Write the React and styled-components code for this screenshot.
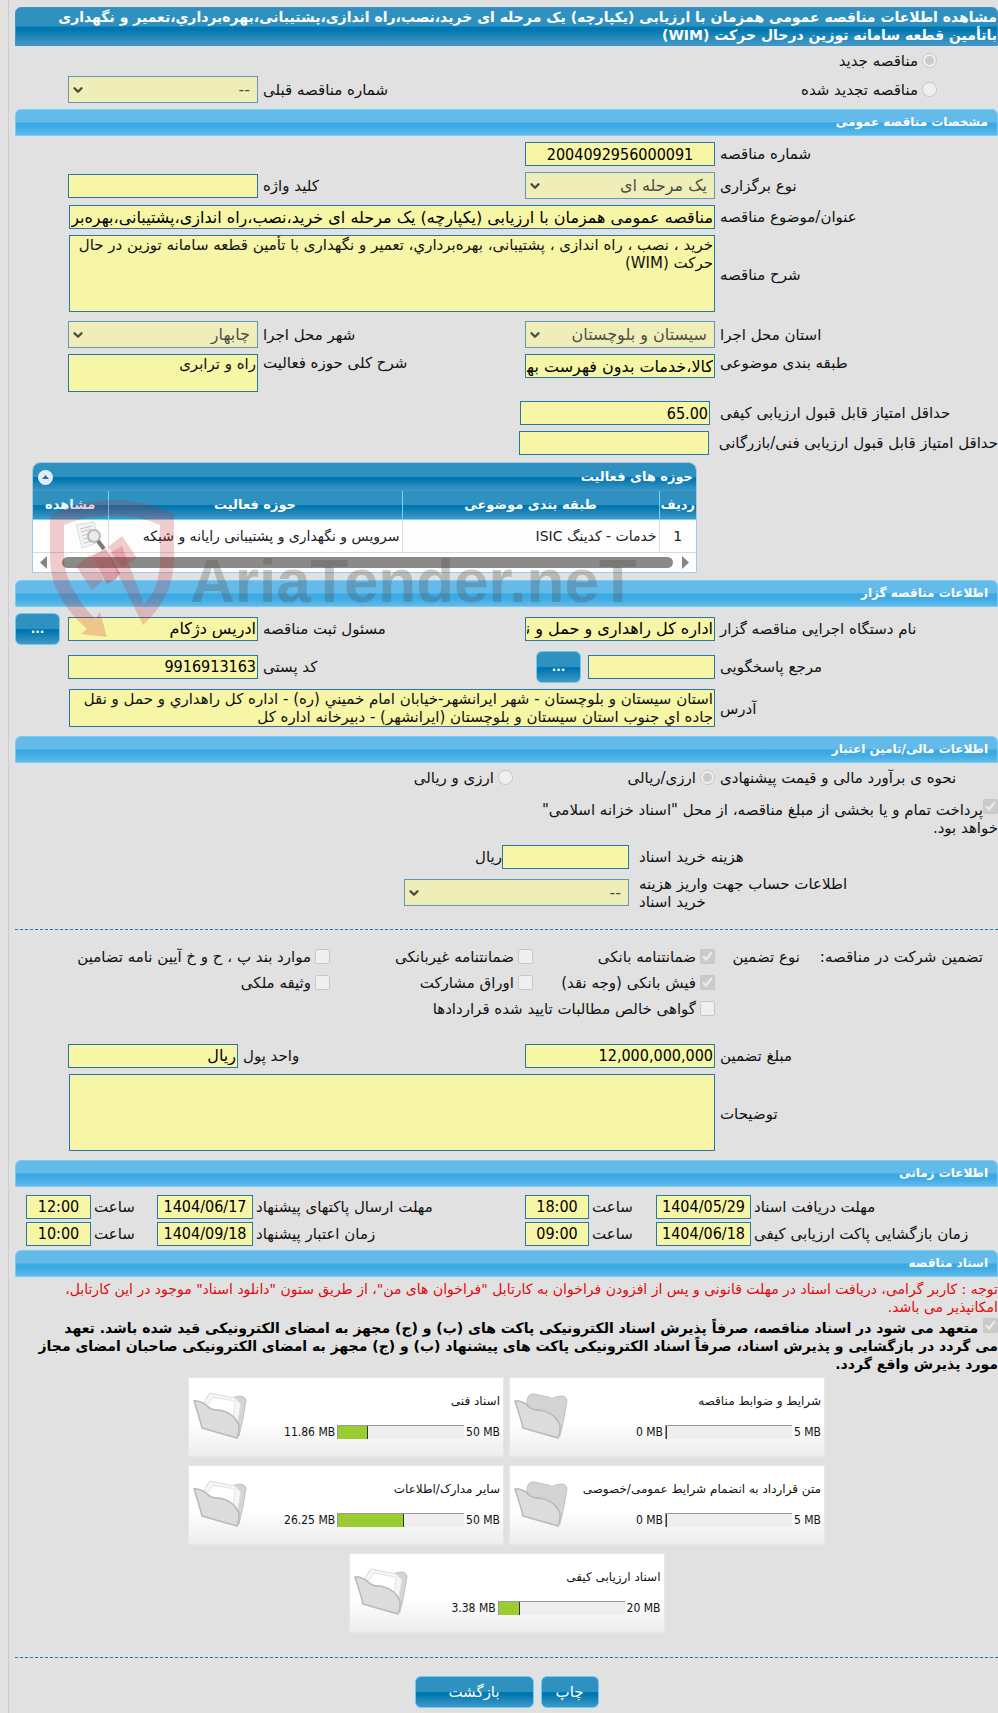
// Libraries
import React from 'react';
import styled, { createGlobalStyle } from 'styled-components';
import { ChevronDown } from 'lucide-react';

const TEXT_FONT = '"DejaVu Sans", sans-serif';
const FIELD_FONT = '"DejaVu Sans Condensed", "DejaVu Sans", sans-serif';

const DARK_BAR = 'linear-gradient(#2f91c0 0, #2f91c0 49%, #0077b0 51%, #0077b0 58%, #4399c6 100%)';
const LIGHT_BAR = 'linear-gradient(#64bbea 0, #64bbea 48%, #39a8e3 52%, #3fabe4 70%, #60baea 100%)';

const TWO_FIELDS = '283fr 190fr 267fr 190fr 53fr';
const UNIT_FIELDS = '283fr 190fr 287fr 170fr 53fr';
const WIDE_FIELD = '283fr 646fr 54fr';
const SCORE_FIELD = '288fr 190fr 505fr';
const COST_FIELD = '369fr 127fr 487fr';
const ACCOUNT_FIELD = '369fr 225fr 389fr';
const CHECKS = '283fr 182fr 203fr 315fr';
const TIMES = '247fr 95fr 67fr 64fr 272fr 96fr 66fr 65fr 11fr';

const schedule = [
  {
    key: 'docs', label: 'مهلت دریافت اسناد', date: '1404/05/29', time: '18:00',
  },
  {
    key: 'send', label: 'مهلت ارسال پاکتهای پیشنهاد', date: '1404/06/17', time: '12:00',
  },
  {
    key: 'open', label: 'زمان بازگشایی پاکت ارزیابی کیفی', date: '1404/06/18', time: '09:00',
  },
  {
    key: 'valid', label: 'زمان اعتبار پیشنهاد', date: '1404/09/18', time: '10:00',
  },
];

const documents = [
  {
    key: 'terms', title: 'شرایط و ضوابط مناقصه', used: 0, limit: 5,
  },
  {
    key: 'technical', title: 'اسناد فنی', used: 11.86, limit: 50,
  },
  {
    key: 'contract', title: 'متن قرارداد به انضمام شرایط عمومی/خصوصی', used: 0, limit: 5,
  },
  {
    key: 'other', title: 'سایر مدارک/اطلاعات', used: 26.25, limit: 50,
  },
  {
    key: 'quality', title: 'اسناد ارزیابی کیفی', used: 3.38, limit: 20,
  },
];

export default function App() {
  return (
    <>
      <GlobalStyle />
      <Page>
        <Title>
          مشاهده اطلاعات مناقصه عمومی همزمان با ارزیابی (یکپارچه) یک مرحله ای خرید،نصب،راه اندازی،پشتیبانی،بهره‌برداري،تعمیر و نگهداری باتأمین قطعه سامانه توزین درحال حرکت (WIM)
        </Title>

        <KindRow>
          <Choice>
            <input type="radio" name="kind" defaultChecked disabled />
            مناقصه جدید
          </Choice>
        </KindRow>
        <KindRow $last>
          <Choice>
            <input type="radio" name="kind" disabled />
            مناقصه تجدید شده
          </Choice>
          <Label htmlFor="previous">شماره مناقصه قبلی</Label>
          <Select id="previous" value="--" />
        </KindRow>

        <SectionTitle>مشخصات مناقصه عمومی</SectionTitle>
        <Form>
          <Row $cols={TWO_FIELDS}>
            <Label htmlFor="number">شماره مناقصه</Label>
            <Input id="number" $center defaultValue="2004092956000091" readOnly />
          </Row>
          <Row $cols={TWO_FIELDS}>
            <Label htmlFor="stages">نوع برگزاری</Label>
            <Select id="stages" value="یک مرحله ای" />
            <Label htmlFor="keyword">کلید واژه</Label>
            <Input id="keyword" readOnly />
          </Row>
          <Row $cols={WIDE_FIELD}>
            <Label htmlFor="subject">عنوان/موضوع مناقصه</Label>
            <Input
              id="subject"
              $text
              defaultValue="مناقصه عمومی همزمان با ارزیابی (یکپارچه) یک مرحله ای خرید،نصب،راه اندازی،پشتیبانی،بهره‌برداری"
              readOnly
            />
          </Row>
          <Row $cols={WIDE_FIELD}>
            <Label htmlFor="details">شرح مناقصه</Label>
            <TextArea
              id="details"
              $tall
              defaultValue="خرید ، نصب ، راه اندازی ، پشتیبانی، بهره‌برداري، تعمیر و نگهداری با تأمین قطعه سامانه توزین در حال حرکت (WIM)"
              readOnly
            />
          </Row>
          <Row $cols={TWO_FIELDS}>
            <Label htmlFor="province">استان محل اجرا</Label>
            <Select id="province" value="سیستان و بلوچستان" />
            <Label htmlFor="city">شهر محل اجرا</Label>
            <Select id="city" value="چابهار" />
          </Row>
          <Row $cols={TWO_FIELDS} $top>
            <Label htmlFor="category">طبقه بندی موضوعی</Label>
            <Input id="category" $text defaultValue="کالا،خدمات بدون فهرست بها" readOnly />
            <Label htmlFor="field">شرح کلی حوزه فعالیت</Label>
            <TextArea id="field" defaultValue="راه و ترابری" readOnly />
          </Row>
          <Row $cols={SCORE_FIELD}>
            <Label htmlFor="quality-score" $far>حداقل امتیاز قابل قبول ارزیابی کیفی</Label>
            <Input id="quality-score" defaultValue="65.00" readOnly />
          </Row>
          <Row $cols={SCORE_FIELD}>
            <Label htmlFor="technical-score" $far>حداقل امتیاز قابل قبول ارزیابی فنی/بازرگانی</Label>
            <Input id="technical-score" readOnly />
          </Row>
          <Activities />
        </Form>

        <SectionTitle>اطلاعات مناقصه گزار</SectionTitle>
        <Form>
          <Row $cols={TWO_FIELDS}>
            <Label htmlFor="agency">نام دستگاه اجرایی مناقصه گزار</Label>
            <Input id="agency" $text defaultValue="اداره کل راهداری و حمل و نقل جاده ای" readOnly />
            <Label htmlFor="officer">مسئول ثبت مناقصه</Label>
            <Input id="officer" $text defaultValue="ادریس دژکام" readOnly />
            <MoreButton type="button">...</MoreButton>
          </Row>
          <Row $cols={TWO_FIELDS}>
            <Label htmlFor="contact">مرجع پاسخگویی</Label>
            <Picker>
              <Input id="contact" readOnly />
              <MoreButton type="button">...</MoreButton>
            </Picker>
            <Label htmlFor="postcode">کد پستی</Label>
            <Input id="postcode" defaultValue="9916913163" readOnly />
          </Row>
          <Row $cols={WIDE_FIELD}>
            <Label htmlFor="address">آدرس</Label>
            <TextArea
              id="address"
              defaultValue="استان سیستان و بلوچستان - شهر ایرانشهر-خیابان امام خمیني (ره) - اداره کل راهداري و حمل و نقل جاده اي جنوب استان سیستان و بلوچستان (ایرانشهر) - دبیرخانه اداره کل"
              readOnly
            />
          </Row>
        </Form>

        <SectionTitle>اطلاعات مالی/تامین اعتبار</SectionTitle>
        <Form>
          <Row $cols={CHECKS}>
            <Label as="span">نحوه ی برآورد مالی و قیمت پیشنهادی</Label>
            <Choice>
              <input type="radio" name="currency" defaultChecked disabled />
              ارزی/ریالی
            </Choice>
            <CurrencyChoice>
              <input type="radio" name="currency" disabled />
              ارزی و ریالی
            </CurrencyChoice>
          </Row>
          <TreasuryNote>
            <input type="checkbox" defaultChecked disabled />
            پرداخت تمام و یا بخشی از مبلغ مناقصه، از محل "اسناد خزانه اسلامی" خواهد بود.
          </TreasuryNote>
          <Row $cols={COST_FIELD}>
            <Label htmlFor="cost" $far>هزینه خرید اسناد</Label>
            <Input id="cost" readOnly />
            <span>ریال</span>
          </Row>
          <Row $cols={ACCOUNT_FIELD}>
            <AccountLabel htmlFor="account">اطلاعات حساب جهت واریز هزینه خرید اسناد</AccountLabel>
            <Select id="account" value="--" />
          </Row>
        </Form>

        <Divider $before={12} $after={14} />

        <Guarantees>
          <GuaranteeLabels>
            <span>تضمین شرکت در مناقصه:</span>
            <span>نوع تضمین</span>
          </GuaranteeLabels>
          <Check checked>ضمانتنامه بانکی</Check>
          <Check>ضمانتنامه غیربانکی</Check>
          <Check>موارد بند پ ، ح و خ آیین نامه تضامین</Check>
          <span />
          <Check checked>فیش بانکی (وجه نقد)</Check>
          <Check>اوراق مشارکت</Check>
          <Check>وثیقه ملکی</Check>
          <span />
          <LongCheck>
            <Check>گواهی خالص مطالبات تایید شده قراردادها</Check>
          </LongCheck>
        </Guarantees>

        <Form>
          <Row $cols={UNIT_FIELDS}>
            <Label htmlFor="amount">مبلغ تضمین</Label>
            <Input id="amount" defaultValue="12,000,000,000" readOnly />
            <Label htmlFor="unit">واحد پول</Label>
            <Input id="unit" $text defaultValue="ریال" readOnly />
          </Row>
          <Row $cols={WIDE_FIELD}>
            <Label htmlFor="notes">توضیحات</Label>
            <TextArea id="notes" $tall readOnly />
          </Row>
        </Form>

        <SectionTitle>اطلاعات زمانی</SectionTitle>
        <Schedule>
          {schedule.map(({
            key, label, date, time,
          }, index) => (
            <React.Fragment key={key}>
              <Label htmlFor={`${key}-date`} $close>{label}</Label>
              <Input id={`${key}-date`} $center defaultValue={date} readOnly />
              <Label htmlFor={`${key}-time`} $close>ساعت</Label>
              <Input id={`${key}-time`} $center defaultValue={time} readOnly />
              {index % 2 === 1 && <span />}
            </React.Fragment>
          ))}
        </Schedule>

        <SectionTitle>اسناد مناقصه</SectionTitle>
        <Warning>
          توجه : کاربر گرامی، دریافت اسناد در مهلت قانونی و پس از افزودن فراخوان به کارتابل "فراخوان های من"، از طریق ستون "دانلود اسناد" موجود در این کارتابل، امکانپذیر می باشد.
        </Warning>
        <Commitment>
          <input type="checkbox" defaultChecked disabled />
          {' '}
          متعهد می شود در اسناد مناقصه، صرفاً پذیرش اسناد الکترونیکی پاکت های (ب) و (ج) مجهز به امضای الکترونیکی قید شده باشد. تعهد
          <br />
          می گردد در بازگشایی و پذیرش اسناد، صرفاً اسناد الکترونیکی پاکت های پیشنهاد (ب) و (ج) مجهز به امضای الکترونیکی صاحبان امضای مجاز مورد پذیرش واقع گردد.
        </Commitment>

        <Cards>
          {documents.map(({ key, ...doc }) => (
            <DocumentCard key={key} {...doc} />
          ))}
        </Cards>

        <Divider $before={24} $after={18} />
        <Actions>
          <Button type="button">چاپ</Button>
          <Button type="button" $wide>بازگشت</Button>
        </Actions>
      </Page>
    </>
  );
}

function Select({ id, value }) {
  return (
    <SelectBox>
      <select id={id} defaultValue={value} disabled>
        <option value={value}>{value}</option>
      </select>
      <ChevronDown size={14} strokeWidth={4} />
    </SelectBox>
  );
}

function Check({ checked, children }) {
  return (
    <Choice>
      <input type="checkbox" defaultChecked={checked} disabled />
      {children}
    </Choice>
  );
}

function Activities() {
  return (
    <ActivitiesRow>
      <Panel>
        <PanelTitle>
          حوزه های فعالیت
          <Collapse type="button" aria-label="بستن">
            <svg width="7" height="4" viewBox="0 0 7 4">
              <path d="M0 4 L3.5 0 L7 4 Z" fill="#2b6f96" />
            </svg>
          </Collapse>
        </PanelTitle>
        <Table>
          <colgroup>
            <col width="37" />
            <col width="257" />
            <col width="294" />
            <col width="75" />
          </colgroup>
          <thead>
            <tr>
              <th>ردیف</th>
              <th>طبقه بندی موضوعی</th>
              <th>حوزه فعالیت</th>
              <th>مشاهده</th>
            </tr>
          </thead>
          <tbody>
            <tr>
              <td className="index">1</td>
              <td>خدمات - کدینگ ISIC</td>
              <td>سرویس و نگهداری و پشتیبانی رایانه و شبکه</td>
              <td><ViewIcon /></td>
            </tr>
          </tbody>
        </Table>
        <Scrollbar>
          <svg width="7" height="13" viewBox="0 0 7 13"><path d="M0 0 L7 6.5 L0 13 Z" /></svg>
          <Thumb />
          <svg width="7" height="13" viewBox="0 0 7 13"><path d="M7 0 L0 6.5 L7 13 Z" /></svg>
        </Scrollbar>
        <Watermark />
      </Panel>
    </ActivitiesRow>
  );
}

function ViewIcon() {
  return (
    <svg width="31" height="30" viewBox="0 0 31 30">
      <path d="M1 4 L19 1 L24 21 L7 27 Z" fill="#f4f4f4" stroke="#dcdcdc" />
      <path d="M5 8 L17 5 M6 11 L16 8 M7 15 L13 13 M8 18 L13 17 M9 22 L16 20" stroke="#c4c4c4" fill="none" />
      <circle cx="19" cy="15" r="6" fill="#e9eaec" stroke="#b9b9b9" strokeWidth="2" />
      <path d="M23 20 L29 28" stroke="#7d7777" strokeWidth="4" />
    </svg>
  );
}

function FolderIcon({ full }) {
  return (
    <svg width="54" height="48" viewBox="0 0 54 48">
      <path d="M13 9 Q14 1 20 2 L34 5 Q38 8 42 5 Q51 2 53 8 Q51 24 46 44 L12 30 Z" fill="#d4d4d4" stroke="#c2c2c2" />
      {full && <path d="M11 10 L17 1 L42 6 L48 12 L43 40 L14 26 Z" fill="#f6f6f6" stroke="#dedede" />}
      {full && <path d="M15 12 L20 5 L42 9 L40 30" fill="#ffffff" stroke="#e3e3e3" />}
      <path
        d="M1 9 Q4 8 12 12 Q18 19 26 18 Q42 21 46 34 Q46 42 44 46 Q26 41 9 36 Q6 24 1 9 Z"
        fill="#dcdcdc"
        stroke="#b9b9b9"
        strokeWidth="1.5"
      />
    </svg>
  );
}

function DocumentCard({ title, used, limit }) {
  return (
    <Card>
      <FolderIcon full={used > 0} />
      <CardBody>
        <h3>{title}</h3>
        <Usage>
          <span>{`${used} MB`}</span>
          <Track>
            <Fill style={{ width: `${(used / limit) * 100}%` }} />
          </Track>
          <span>{`${limit} MB`}</span>
        </Usage>
      </CardBody>
    </Card>
  );
}

function Watermark() {
  return (
    <WatermarkSvg width="640" height="140" viewBox="0 0 640 140" aria-hidden="true">
      <g fill="#c8202c" fillOpacity="0.22">
        <path d="M0 15 Q30 0 63 0 Q95 0 124 14 V60 Q123 98 93 125 L58 54 L72 46 L94 104 Q110 88 110 60 V25 Q88 15 63 15 Q38 15 14 25 V60 Q16 88 45 119 L50 112 L57 137 L31 134 L37 129 Q1 98 0 60 Z" />
        <path d="M58 47 L72 36 L87 58 L72 68 Z" />
        <path d="M41 56 L56 49 L70 73 L66 79 L57 84 Z" fillOpacity="0.35" />
        <path d="M26 66 L40 55 L54 80 L42 90 Z" />
      </g>
      <text x="140" y="102">AriaTender.neT</text>
    </WatermarkSvg>
  );
}

const GlobalStyle = createGlobalStyle`
  body {
    margin: 0;
    background: #e1e1e1;
  }
  * {
    box-sizing: border-box;
  }
`;

const Page = styled.main`
  direction: rtl;
  margin-left: 8px;
  padding: 7px 0 6px 6px;
  border-left: 1px solid #cdcdcd;
  font: 15px/18px ${TEXT_FONT};
  color: #111;
  input[type='radio'], input[type='checkbox'] {
    width: 15px;
    height: 15px;
    margin: 0;
  }
`;

const Title = styled.h1`
  margin: 0;
  padding-bottom: 1px;
  border: 1px solid #3b93cf;
  border-radius: 6px 6px 0 0;
  background: ${DARK_BAR};
  color: #fff;
  font-size: 14px;
  line-height: 18px;
`;

const SectionTitle = styled.h2`
  margin: 0;
  padding-right: 9px;
  border: 1px solid #70d0f7;
  border-radius: 6px 6px 0 0;
  background: ${LIGHT_BAR};
  color: #fff;
  font-size: 12px;
  line-height: 25px;
`;

const Form = styled.section`
  display: flex;
  flex-direction: column;
  gap: 6px;
  padding: 6px 0;
`;

const Row = styled.div`
  display: grid;
  grid-template-columns: ${({ $cols }) => $cols};
  align-items: ${({ $top }) => ($top ? 'start' : 'center')};
`;

const KindRow = styled(Row)`
  grid-template-columns: 61fr 419fr 260fr 190fr 53fr;
  height: 29px;
  margin-bottom: ${({ $last }) => ($last ? 5 : 0)}px;
  > :first-child {
    grid-column: 2;
  }
`;

const Label = styled.label`
  padding-left: ${({ $far, $close }) => ($far && 10) || ($close && 3) || 5}px;
  text-align: left;
  white-space: nowrap;
`;

const AccountLabel = styled.label`
  justify-self: end;
  width: 226px;
  padding-left: 10px;
  text-align: left;
`;

const Choice = styled.label`
  display: flex;
  align-items: center;
  gap: 4px;
  white-space: nowrap;
`;

const CurrencyChoice = styled(Choice)`
  padding-right: 20px;
`;

const Input = styled.input`
  width: 100%;
  min-width: 0;
  height: 24px;
  padding: 0 1px;
  border: 1px solid #2678a8;
  background: #f7f5a6;
  color: #000;
  font: 16px ${({ $text }) => ($text ? TEXT_FONT : FIELD_FONT)};
  text-align: ${({ $center }) => ($center ? 'center' : 'right')};
`;

const TextArea = styled.textarea`
  display: block;
  width: 100%;
  height: ${({ $tall }) => ($tall ? 77 : 38)}px;
  margin: 0 0 3px;
  padding: 0 1px;
  overflow: hidden;
  resize: none;
  border: 1px solid #2678a8;
  background: #f7f5a6;
  color: #111;
  font: 15px/18px ${TEXT_FONT};
`;

const SelectBox = styled.div`
  display: grid;
  align-items: center;
  > * {
    grid-area: 1 / 1;
  }
  select {
    width: 100%;
    height: 27px;
    padding: 0 7px;
    appearance: none;
    border: 1px solid #6099b8;
    border-radius: 0;
    background: #f0eeb8;
    color: #4f4f47;
    opacity: 1;
    font: 16px ${TEXT_FONT};
  }
  svg {
    justify-self: end;
    margin-left: 3px;
    color: #4b4b43;
    pointer-events: none;
  }
`;

const Button = styled.button`
  width: ${({ $wide }) => ($wide ? 119 : 58)}px;
  height: 32px;
  padding: 0;
  border: 1px solid #66cdf6;
  border-radius: 6px;
  background: ${DARK_BAR};
  color: #fff;
  font: 15px ${TEXT_FONT};
`;

const MoreButton = styled(Button)`
  width: 45px;
  justify-self: end;
  font-weight: bold;
  font-size: 12px;
`;

const Picker = styled.div`
  display: flex;
  align-items: center;
  gap: 7px;
  padding-left: 11px;
  button {
    flex: none;
  }
`;

const ActivitiesRow = styled.div`
  display: grid;
  grid-template-columns: 301fr 665fr 17fr;
  padding: 1px 0;
  > * {
    grid-column: 2;
  }
`;

const Panel = styled.div`
  position: relative;
  border: 1px solid #a5c9e2;
  border-radius: 8px 8px 0 0;
  background: #fdfdfd;
`;

const PanelTitle = styled.h3`
  display: flex;
  align-items: center;
  justify-content: space-between;
  height: 28px;
  margin: 0;
  padding: 0 3px 0 5px;
  border-radius: 7px 7px 0 0;
  background: ${DARK_BAR};
  color: #fff;
  font-size: 13px;
`;

const Collapse = styled.button`
  display: grid;
  place-items: center;
  width: 15px;
  height: 15px;
  padding: 0;
  border: 0;
  border-radius: 50%;
  background: #e3edf8;
`;

const Table = styled.table`
  width: 100%;
  table-layout: fixed;
  border-collapse: collapse;
  th {
    height: 28px;
    padding: 0;
    border-left: 1px solid #74d3f8;
    border-bottom: 1px solid #74d3f8;
    background: ${DARK_BAR};
    color: #fff;
    font-size: 13px;
    white-space: nowrap;
  }
  td {
    height: 33px;
    padding: 0 2px;
    border-left: 1px solid #e0e0e0;
    border-bottom: 1px solid #d8d8d8;
    color: #222;
    font-size: 14px;
    white-space: nowrap;
  }
  th:last-child, td:last-child {
    border-left: 0;
  }
  td.index {
    text-align: center;
  }
  svg {
    display: block;
  }
`;

const Scrollbar = styled.div`
  display: flex;
  align-items: center;
  gap: 9px;
  height: 19px;
  padding: 0 7px;
  fill: #858585;
`;

const Thumb = styled.div`
  flex: 1;
  height: 11px;
  margin-left: 6px;
  border-radius: 6px;
  background: #8a8a8a;
`;

const WatermarkSvg = styled.svg`
  position: absolute;
  top: 37px;
  left: 17px;
  direction: ltr;
  pointer-events: none;
  text {
    fill: #4a4a4a;
    fill-opacity: 0.28;
    font: bold 62px "Liberation Sans Narrow", "Liberation Sans", sans-serif;
  }
`;

const TreasuryNote = styled.label`
  max-width: 464px;
  margin: 6px 0 2px;
  input {
    vertical-align: 1px;
  }
`;

const Divider = styled.hr`
  margin: ${({ $before, $after }) => `${$before}px 0 ${$after}px`};
  border: 0;
  border-top: 1px dashed #2678a8;
`;

const Guarantees = styled.div`
  display: grid;
  grid-template-columns: ${CHECKS};
  grid-auto-rows: 26px;
  align-items: center;
  margin-bottom: 16px;
`;

const GuaranteeLabels = styled.div`
  display: flex;
  gap: 20px;
  padding-right: 15px;
  white-space: nowrap;
`;

const LongCheck = styled.div`
  grid-column: span 3;
`;

const Schedule = styled.div`
  display: grid;
  grid-template-columns: ${TIMES};
  align-items: center;
  row-gap: 3px;
  padding: 8px 0 4px;
`;

const Warning = styled.p`
  margin: 3px 0 2px;
  color: #e00b0b;
  font-size: 14px;
`;

const Commitment = styled.label`
  display: block;
  color: #000;
  font-size: 14px;
  font-weight: bold;
`;

const Cards = styled.div`
  display: flex;
  flex-wrap: wrap;
  justify-content: center;
  gap: 8px 5px;
  max-width: 700px;
  margin: 4px auto 0;
`;

const Card = styled.article`
  display: flex;
  direction: ltr;
  width: 316px;
  height: 80px;
  padding: 14px 3px 0 4px;
  border: 1px solid #e6e6e6;
  background: linear-gradient(#fff 55%, #ededed);
`;

const CardBody = styled.div`
  flex: 1;
  display: flex;
  flex-direction: column;
  align-items: flex-end;
  gap: 13px;
  font-family: ${FIELD_FONT};
  font-size: 12px;
  h3 {
    direction: rtl;
    margin: 0;
    font: 12px/18px ${TEXT_FONT};
    white-space: nowrap;
  }
`;

const Usage = styled.div`
  display: flex;
  align-items: center;
  gap: 2px;
`;

const Track = styled.div`
  width: 127px;
  height: 14px;
  border-top: 1px solid #999;
  border-left: 1px solid #999;
  background: #eee;
`;

const Fill = styled.div`
  height: 100%;
  border-right: 1px solid #333;
  background: #9acd32;
`;

const Actions = styled.div`
  display: flex;
  justify-content: center;
  gap: 7px;
`;
